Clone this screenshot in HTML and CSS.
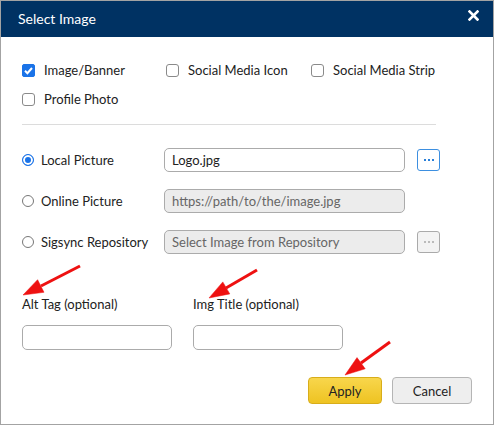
FILE: index.html
```html
<!DOCTYPE html>
<html>
<head>
<meta charset="utf-8">
<link rel="stylesheet" href="styles.css">
</head>
<body>
<div class="dialog">
  <div class="header">
    <span class="title">Select Image</span>
    <svg class="close" width="11" height="11" viewBox="0 0 11 11"><path d="M1.5 1.5 L9.5 9.5 M9.5 1.5 L1.5 9.5" stroke="#fff" stroke-width="2.6" stroke-linecap="square"/></svg>
  </div>
  <div class="content">
    <div class="options">
      <label class="opt"><span class="cb checked"><svg width="13" height="13" viewBox="0 0 13 13"><path d="M3 6.8 L5.4 9.2 L10 4" fill="none" stroke="#fff" stroke-width="2"/></svg></span>Image/Banner</label>
      <label class="opt"><span class="cb"></span>Social Media Icon</label>
      <label class="opt"><span class="cb"></span>Social Media Strip</label>
      <label class="opt"><span class="cb"></span>Profile Photo</label>
    </div>
    <div class="sep"></div>
    <div class="sources">
      <div class="src">
        <label class="radio-label"><span class="rb on"></span>Local Picture</label>
        <div class="field">Logo.jpg</div>
        <span class="more active"><i></i><i></i><i></i></span>
      </div>
      <div class="src">
        <label class="radio-label"><span class="rb"></span>Online Picture</label>
        <div class="field disabled">https://path/to/the/image.jpg</div>
      </div>
      <div class="src">
        <label class="radio-label"><span class="rb"></span>Sigsync Repository</label>
        <div class="field disabled">Select Image from Repository</div>
        <span class="more"><i></i><i></i><i></i></span>
      </div>
    </div>
    <div class="meta">
      <div class="meta-col">
        <div class="meta-label">Alt Tag (optional)</div>
        <div class="meta-input"></div>
      </div>
      <div class="meta-col">
        <div class="meta-label">Img Title (optional)</div>
        <div class="meta-input"></div>
      </div>
    </div>
    <div class="actions">
      <button class="btn apply">Apply</button>
      <button class="btn cancel">Cancel</button>
    </div>
  </div>
  <svg class="arrows" width="494" height="425" viewBox="0 0 494 425">
    <g fill="#ee1111" stroke="#ee1111">
      <line x1="80" y1="266" x2="41" y2="286" stroke-width="3"/>
      <polygon points="23,295 44,292.3 37.6,279.7" stroke-width="0.5"/>
      <line x1="257" y1="270" x2="226" y2="288" stroke-width="3"/>
      <polygon points="209,298 229.8,293.9 222.8,281.9" stroke-width="0.5"/>
      <line x1="390" y1="342" x2="361" y2="363" stroke-width="3"/>
      <polygon points="345,375 365.2,368.8 357,357.6" stroke-width="0.5"/>
    </g>
  </svg>
</div>
</body>
</html>
```
FILE: styles.css
```css
* { box-sizing: border-box; }
html, body { margin: 0; padding: 0; background: #fff; }
body { font-family: Lato, "Open Sans", sans-serif; font-size: 13px; color: #222; }

.dialog {
  position: relative;
  width: 494px;
  height: 425px;
  border: 1px solid #a3a3a3;
  background: #fff;
}

.header {
  height: 36px;
  background: #003263;
  display: flex;
  align-items: center;
  justify-content: space-between;
  padding: 0 14px 2px 17px;
}
.title { color: #fff; font-size: 14px; }
.close { margin-top: -5px; }

.content { padding: 0 21px; }

.options {
  display: grid;
  grid-template-columns: 144px 145px auto;
  grid-auto-rows: 20px;
  row-gap: 9px;
  margin-top: 23px;
}
.opt { display: flex; align-items: center; gap: 9px; white-space: nowrap; }
.cb {
  width: 13px; height: 13px;
  border: 1px solid #8a8a8a;
  border-radius: 3px;
  background: #fff;
  display: inline-flex;
}
.cb.checked { background: #1a73e8; border-color: #1a73e8; border-radius: 2px; }
.cb.checked svg { margin: -1px; }

.sep { height: 1px; background: #dcdcdc; margin: 15px 36px 0 0; }

.sources { display: flex; flex-direction: column; gap: 17px; margin-top: 23px; }
.src { display: flex; align-items: center; height: 24px; }
.radio-label { display: flex; align-items: center; gap: 7px; width: 142px; white-space: nowrap; }
.rb {
  width: 12px; height: 12px;
  border: 1px solid #777;
  border-radius: 50%;
  background: #fff;
}
.rb.on { border-color: #1a73e8; box-shadow: inset 0 0 0 2px #fff; background: #1a73e8; }

.field {
  width: 241px; height: 24px;
  border: 1px solid #ababab;
  border-radius: 5px;
  padding: 0 7px;
  display: flex; align-items: center;
  color: #222;
}
.field.disabled { background: #ececec; color: #666; }

.more {
  margin-left: 12px;
  width: 23px; height: 22px;
  border: 1px solid #aaa;
  border-radius: 3px;
  background: #f3f3f3;
  display: inline-flex; align-items: center; justify-content: center; gap: 2px;
}
.more i { width: 2px; height: 2px; background: #bbb; }
.more.active { border-color: #3d8fe0; background: #fff; }
.more.active i { background: #2a7fd8; }

.meta { display: flex; gap: 21px; margin-top: 42px; }
.meta-label { height: 16px; line-height: 16px; }
.meta-input {
  width: 150px; height: 25px;
  border: 1px solid #ababab;
  border-radius: 5px;
  margin-top: 13px;
}

.actions { display: flex; justify-content: flex-end; gap: 10px; margin-top: 27px; }
.btn {
  font-family: Lato, "Open Sans", sans-serif;
  font-size: 13px;
  color: #222;
  height: 27px;
  border-radius: 4px;
  padding: 0;
}
.apply { width: 74px; background: linear-gradient(#f8d64c, #eec322); border: 1px solid #d8ad1a; }
.cancel { width: 80px; background: #eeeeee; border: 1px solid #b5b5b5; }

.arrows { position: absolute; left: -1px; top: -1px; pointer-events: none; }
```
